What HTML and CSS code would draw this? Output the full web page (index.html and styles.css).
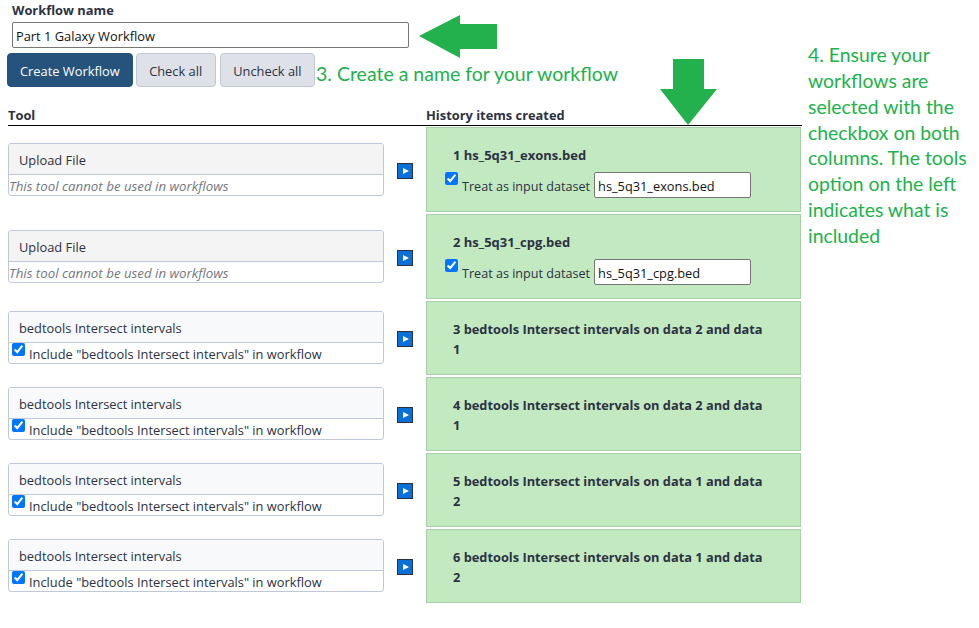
FILE: index.html
```html
<!DOCTYPE html>
<html lang="en">
<head>
    <meta charset="UTF-8">
    <meta name="viewport" content="width=device-width, initial-scale=1.0">
    <title>Extract Workflow</title>
    <link rel="stylesheet" href="styles.css">
</head>
<body>
    <div id="page">
        <label class="name-label" for="workflowName">Workflow name</label>
        <input type="text" id="workflowName" class="name-input" value="Part 1 Galaxy Workflow">

        <div class="actions">
            <button class="btn btn-primary">Create Workflow</button>
            <button class="btn">Check all</button>
            <button class="btn">Uncheck all</button>
            <span class="note note-name">3. Create a name for your workflow</span>
        </div>

        <div class="table-head">
            <div>Tool</div>
            <div class="head-history">History items created</div>
        </div>

        <div class="step">
            <div class="tool-card">
                <div class="tool-title tool-title-off">Upload File</div>
                <div class="tool-body tool-disabled">This tool cannot be used in workflows</div>
            </div>
            <div class="arrow-cell"><span class="run-arrow"></span></div>
            <div class="history-item">
                <div class="history-title">1 hs_5q31_exons.bed</div>
                <div class="history-input">
                    <input type="checkbox" checked>
                    <span>Treat as input dataset</span>
                    <input type="text" class="dataset-input" value="hs_5q31_exons.bed">
                </div>
            </div>
        </div>

        <div class="step">
            <div class="tool-card">
                <div class="tool-title tool-title-off">Upload File</div>
                <div class="tool-body tool-disabled">This tool cannot be used in workflows</div>
            </div>
            <div class="arrow-cell"><span class="run-arrow"></span></div>
            <div class="history-item">
                <div class="history-title">2 hs_5q31_cpg.bed</div>
                <div class="history-input">
                    <input type="checkbox" checked>
                    <span>Treat as input dataset</span>
                    <input type="text" class="dataset-input" value="hs_5q31_cpg.bed">
                </div>
            </div>
        </div>

        <div class="step step-short">
            <div class="tool-card">
                <div class="tool-title">bedtools Intersect intervals</div>
                <div class="tool-body"><input type="checkbox" checked><span>Include "bedtools Intersect intervals" in workflow</span></div>
            </div>
            <div class="arrow-cell"><span class="run-arrow"></span></div>
            <div class="history-item history-short">
                <div class="history-title">3 bedtools Intersect intervals on data 2 and data 1</div>
            </div>
        </div>

        <div class="step step-short">
            <div class="tool-card">
                <div class="tool-title">bedtools Intersect intervals</div>
                <div class="tool-body"><input type="checkbox" checked><span>Include "bedtools Intersect intervals" in workflow</span></div>
            </div>
            <div class="arrow-cell"><span class="run-arrow"></span></div>
            <div class="history-item history-short">
                <div class="history-title">4 bedtools Intersect intervals on data 2 and data 1</div>
            </div>
        </div>

        <div class="step step-short">
            <div class="tool-card">
                <div class="tool-title">bedtools Intersect intervals</div>
                <div class="tool-body"><input type="checkbox" checked><span>Include "bedtools Intersect intervals" in workflow</span></div>
            </div>
            <div class="arrow-cell"><span class="run-arrow"></span></div>
            <div class="history-item history-short">
                <div class="history-title">5 bedtools Intersect intervals on data 1 and data 2</div>
            </div>
        </div>

        <div class="step step-short">
            <div class="tool-card">
                <div class="tool-title">bedtools Intersect intervals</div>
                <div class="tool-body"><input type="checkbox" checked><span>Include "bedtools Intersect intervals" in workflow</span></div>
            </div>
            <div class="arrow-cell"><span class="run-arrow"></span></div>
            <div class="history-item history-short">
                <div class="history-title">6 bedtools Intersect intervals on data 1 and data 2</div>
            </div>
        </div>
    </div>

    <svg class="callout callout-left" width="78" height="43" viewBox="0 0 78 43"><path d="M0 21 L41 0 V9 H78 V34 H41 V43 Z" fill="#22b14c"/></svg>
    <svg class="callout callout-down" width="57" height="66" viewBox="0 0 57 66"><path d="M13 0 H44 V30 H57 L28 66 L0 30 H13 Z" fill="#22b14c"/></svg>
    <div class="note note-select">4. Ensure your workflows are selected with the checkbox on both columns. The tools option on the left indicates what is included</div>
</body>
</html>
```

FILE: styles.css
```css
body {
    font-family: 'Open Sans', 'Noto Sans', sans-serif;
    font-size: 12.85px;
    color: #2c3143;
    background-color: #fff;
    margin: 0;
    width: 979px;
    height: 628px;
    overflow: hidden;
    position: relative;
}
#page {
    width: 794px;
    padding: 2px 0 0 8px;
}
.name-label {
    display: block;
    margin-left: 4px;
    height: 20px;
    line-height: 17px;
    font-weight: 700;
}
.name-input {
    display: block;
    box-sizing: border-box;
    width: 397px;
    height: 26px;
    margin-left: 4px;
    padding: 2px 3px 0;
    border: 1px solid #767676;
    border-radius: 2px;
    font: inherit;
    color: #111;
}
.actions {
    display: flex;
    align-items: flex-start;
    margin: 5px 0 0 -1px;
    height: 34px;
}
.btn {
    height: 34px;
    margin-right: 4px;
    padding: 2px 12.5px 0;
    border: 1px solid #bfc8d8;
    border-radius: 4px;
    background-color: #dee2e8;
    color: #2c3143;
    font: inherit;
    cursor: pointer;
}
.btn-primary {
    padding: 2px 12px 0;
    border-color: #25537b;
    background-color: #25537b;
    color: #fff;
    margin-right: 3px;
}
.note {
    font-family: Lato, 'Open Sans', sans-serif;
    font-size: 19.4px;
    color: #22b14c;
}
.note-name {
    font-size: 19.5px;
    line-height: 30px;
    margin: 6px 0 0 -3px;
}
.note-select {
    position: absolute;
    left: 808px;
    top: 42px;
    width: 168px;
    line-height: 25.85px;
}
.table-head {
    display: grid;
    grid-template-columns: 418px 1fr;
    margin-top: 19px;
    height: 19px;
    line-height: 19px;
    font-weight: 700;
    border-bottom: 1px solid #000;
}
.step {
    display: grid;
    grid-template-columns: 376px 42px 375px;
    align-items: center;
    margin-top: 2px;
}
.table-head + .step {
    margin-top: 1px;
}
.step-short .tool-card {
    margin-bottom: 1px;
}
.tool-card {
    border: 1px solid #bfc8d8;
    border-radius: 3px;
    overflow: hidden;
}
.tool-title {
    height: 30px;
    line-height: 33px;
    padding-left: 10px;
    background-color: #f8f9fb;
    border-bottom: 1px solid #bfc8d8;
}
.tool-title-off {
    background-color: #f4f4f4;
}
.tool-body {
    height: 20px;
    line-height: 22px;
    padding-left: 3px;
    white-space: nowrap;
}
.tool-body input {
    width: 13px;
    height: 13px;
    margin: 0 4px 0 0;
    vertical-align: 3px;
    accent-color: #0075ff;
}
.tool-disabled {
    padding-left: 0;
    font-size: 13.3px;
    font-style: italic;
    color: #737783;
}
.arrow-cell {
    display: flex;
    padding-left: 13px;
    position: relative;
    top: 1px;
}
.run-arrow {
    box-sizing: border-box;
    width: 16px;
    height: 16px;
    border: 1px solid #2c3143;
    background-color: #0a6fd8;
    display: flex;
    align-items: center;
    justify-content: center;
}
.run-arrow::before {
    content: "";
    border-left: 6px solid #fff;
    border-top: 3.5px solid transparent;
    border-bottom: 3.5px solid transparent;
    margin-left: 1px;
}
.history-item {
    box-sizing: border-box;
    height: 85px;
    padding: 17px 30px 0 26px;
    background-color: #c3e9c1;
    border: 1px solid #a8d0a8;
}
.history-short {
    height: 74px;
}
.history-title {
    font-size: 13px;
    font-weight: 700;
    line-height: 20px;
}
.history-short .history-title {
    font-size: 12.8px;
}
.history-input {
    display: flex;
    align-items: center;
    margin: 7px 0 0 -8px;
    height: 26px;
    font-size: 12.6px;
}
.history-input span {
    position: relative;
    top: 1px;
}
.history-input input[type="checkbox"] {
    width: 13px;
    height: 13px;
    margin: -13px 4px 0 0;
    accent-color: #0075ff;
}
.dataset-input {
    box-sizing: border-box;
    width: 157px;
    height: 26px;
    margin-left: 4px;
    padding: 2px 3px 0;
    border: 1px solid #767676;
    border-radius: 2px;
    font: inherit;
    font-size: 12.8px;
    color: #111;
}
.callout {
    position: absolute;
}
.callout-left {
    left: 419px;
    top: 15px;
}
.callout-down {
    left: 660px;
    top: 59px;
}
```
